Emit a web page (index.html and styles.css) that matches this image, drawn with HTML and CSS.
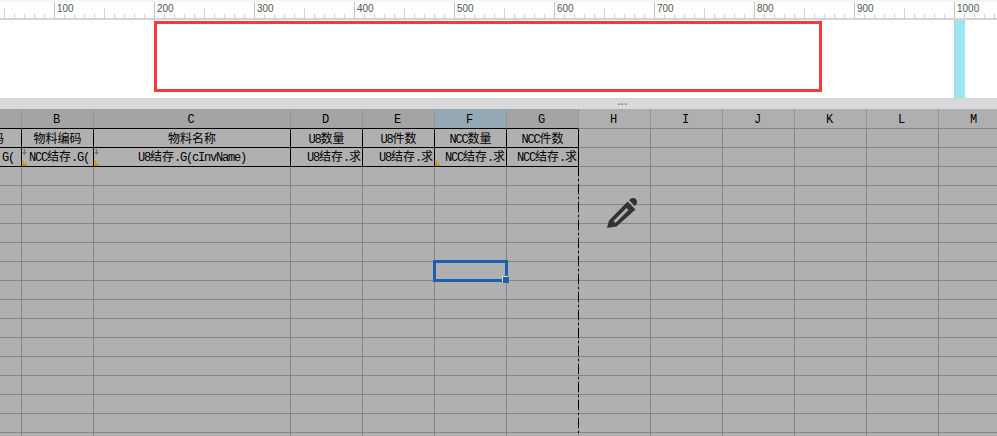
FILE: index.html
```html
<!DOCTYPE html>
<html lang="zh">
<head>
<meta charset="utf-8">
<title>Report designer</title>
<link rel="stylesheet" href="styles.css">
</head>
<body>
<div class="ruler">
  <span class="seg"></span><span class="seg">100</span><span class="seg">200</span><span class="seg">300</span><span class="seg">400</span><span class="seg">500</span><span class="seg">600</span><span class="seg">700</span><span class="seg">800</span><span class="seg">900</span><span class="seg">1000</span>
</div>
<div class="canvas">
  <div class="frame"></div>
  <div class="band"></div>
</div>
<div class="splitter"><span class="grip">···</span></div>
<div class="sheet">
  <div class="h k"></div><div class="h k">B</div><div class="h k">C</div><div class="h k">D</div><div class="h k">E</div><div class="h k sel">F</div><div class="h k">G</div><div class="h">H</div><div class="h">I</div><div class="h">J</div><div class="h">K</div><div class="h">L</div><div class="h">M</div>

  <div class="k t title a-title">码</div><div class="k t title">物料编码</div><div class="k t title">物料名称</div><div class="k t title"><span class="l">U8</span>数量</div><div class="k t title"><span class="l">U8</span>件数</div><div class="k t title"><span class="l">NCC</span>数量</div><div class="k t title"><span class="l">NCC</span>件数</div><div></div><div></div><div></div><div></div><div></div><div></div>

  <div class="k t end a-field"><span class="l">G(</span></div><div class="k t left tri arrow"><span class="l">NCC</span>结存<span class="l">.G(</span></div><div class="k t tri arrow"><span class="l">U8</span>结存<span class="l">.G(cInvName)</span></div><div class="k t end"><span class="l">U8</span>结存<span class="l">.</span>求</div><div class="k t end"><span class="l">U8</span>结存<span class="l">.</span>求</div><div class="k t end tri"><span class="l">NCC</span>结存<span class="l">.</span>求</div><div class="k t end"><span class="l">NCC</span>结存<span class="l">.</span>求</div><div></div><div></div><div></div><div></div><div></div><div></div>

  <div></div><div></div><div></div><div></div><div></div><div></div><div></div><div></div><div></div><div></div><div></div><div></div><div></div>
  <div></div><div></div><div></div><div></div><div></div><div></div><div></div><div></div><div></div><div></div><div></div><div></div><div></div>
  <div></div><div></div><div></div><div></div><div></div><div></div><div></div><div></div><div></div><div></div><div></div><div></div><div></div>
  <div></div><div></div><div></div><div></div><div></div><div></div><div></div><div></div><div></div><div></div><div></div><div></div><div></div>
  <div></div><div></div><div></div><div></div><div></div><div></div><div></div><div></div><div></div><div></div><div></div><div></div><div></div>
  <div></div><div></div><div></div><div></div><div></div><div></div><div></div><div></div><div></div><div></div><div></div><div></div><div></div>
  <div></div><div></div><div></div><div></div><div></div><div></div><div></div><div></div><div></div><div></div><div></div><div></div><div></div>
  <div></div><div></div><div></div><div></div><div></div><div></div><div></div><div></div><div></div><div></div><div></div><div></div><div></div>
  <div></div><div></div><div></div><div></div><div></div><div></div><div></div><div></div><div></div><div></div><div></div><div></div><div></div>
  <div></div><div></div><div></div><div></div><div></div><div></div><div></div><div></div><div></div><div></div><div></div><div></div><div></div>
  <div></div><div></div><div></div><div></div><div></div><div></div><div></div><div></div><div></div><div></div><div></div><div></div><div></div>
  <div></div><div></div><div></div><div></div><div></div><div></div><div></div><div></div><div></div><div></div><div></div><div></div><div></div>
  <div></div><div></div><div></div><div></div><div></div><div></div><div></div><div></div><div></div><div></div><div></div><div></div><div></div>
  <div></div><div></div><div></div><div></div><div></div><div></div><div></div><div></div><div></div><div></div><div></div><div></div><div></div>
  <div></div><div></div><div></div><div></div><div></div><div></div><div></div><div></div><div></div><div></div><div></div><div></div><div></div>

  <div class="pagebreak"></div>
  <div class="selection"><span class="handle"></span></div>
  <svg class="pencil" viewBox="0 0 30 30" aria-hidden="true">
    <path fill-rule="evenodd" d="M0 30 L2 22.5 L20.5 3.5 L28.5 11.5 L9.5 28.5 Z M6.5 23 L8.5 25 L21.5 12 L19.5 10 Z"/>
    <path d="M22 2.2 L23.5 .8 Q26.5 -1 29 1.2 Q31 4 29.2 6.6 L28 8 Z"/>
  </svg>
</div>
</body>
</html>
```
FILE: styles.css
```css
* { box-sizing: border-box; }
html, body { margin: 0; padding: 0; }
body {
  width: 997px;
  height: 436px;
  overflow: hidden;
  background: #fff;
  font-family: "Liberation Mono", "Noto Sans CJK SC", monospace;
  font-size: 12px;
  color: #000;
}

/* ruler */
.ruler {
  display: flex;
  height: 20px;
  padding-top: 2px;
  margin-left: -46px;
  overflow: hidden;
  width: 1043px;
  background: linear-gradient(#f5f5f5 2px, #fff 2px);
  border-bottom: 2px solid #d4d4d4;
}
.seg {
  flex: 0 0 100px;
  height: 16px;
  padding: 1px 0 0 2px;
  font: 10px/12px "Liberation Sans", sans-serif;
  color: #555;
  border-left: 1px solid #c4c4c4;
  background:
    linear-gradient(#d0d0d0, #d0d0d0) 49px 6px / 1px 10px no-repeat,
    repeating-linear-gradient(90deg, transparent 0 9px, #d4d4d4 9px 10px) 0 12px / 100% 4px no-repeat;
}

/* canvas */
.canvas {
  position: relative;
  height: 79px;
  background: #fff;
  border-bottom: 1px solid #d0d0d0;
}
.frame {
  position: absolute;
  left: 154px;
  top: 1px;
  width: 668px;
  height: 71px;
  border: 3px solid #f93a3a;
}
.band {
  position: absolute;
  left: 954px;
  top: 0;
  width: 11px;
  height: 78px;
  background: #9ce5f5;
  border-left: 1px solid #c8c8c8;
}

/* splitter */
.splitter {
  display: flex;
  justify-content: center;
  height: 10px;
  background: #d9d9db;
  padding-left: 248px;
  color: #777;
  font: bold 10px/10px "Liberation Sans", sans-serif;
}
.grip { height: 10px; line-height: 11px; }

/* sheet */
.sheet {
  position: relative;
  display: grid;
  grid-template-columns: 22px 72px 197px repeat(10, 72px);
  grid-auto-rows: 19px;
  grid-template-rows: 20px;
  width: 997px;
  height: 327px;
  overflow: hidden;
  background: #b0b0b0;
}
.sheet > div {
  border-right: 1px solid #858585;
  border-bottom: 1px solid #858585;
}
.sheet > .h {
  background: #afafaf;
  border-right-color: #969696;
  text-align: center;
  line-height: 19px;
  padding: 2px 2px 0 0;
}
.sheet > .h.k { background: #a4a4a4; border-bottom-color: #000; }
.sheet > .h.sel { background: #94a9b3; }
.sheet > .k:not(.h) { border-color: #000; }

.t {
  position: relative;
  overflow: hidden;
  white-space: nowrap;
  text-align: center;
  line-height: 18px;
  padding-top: 1px;
}
.sheet > .title { padding-top: 3px; line-height: 16px; }
.end { text-align: right; padding-right: 1px; }
.sheet > .a-title { text-align: left; text-indent: -8px; }
.sheet > .a-field { padding-right: 7px; }
.sheet > .left { text-align: left; padding-left: 7px; }
.l { font-size: 12px; letter-spacing: -1.2px; }

.tri::after {
  content: "";
  position: absolute;
  left: 0;
  bottom: 0;
  width: 0;
  height: 0;
  border-bottom: 6px solid #c69a1a;
  border-right: 6px solid transparent;
}
.arrow::before {
  content: "";
  position: absolute;
  left: 0;
  top: 1px;
  width: 5px;
  height: 6px;
  background: #777;
  clip-path: polygon(35% 0, 65% 0, 65% 50%, 100% 50%, 50% 100%, 0 50%, 35% 50%);
}

/* overlays */
.sheet > .pagebreak {
  position: absolute;
  left: 578px;
  top: 57px;
  width: 1px;
  height: 270px;
  border: 0;
  background: repeating-linear-gradient(#000 0 10px, transparent 10px 13px, #000 13px 15px, transparent 15px 18px);
}
.sheet > .selection {
  position: absolute;
  left: 433px;
  top: 151px;
  width: 75px;
  height: 22px;
  border: 3px solid #1f5fb0;
}
.handle {
  position: absolute;
  right: -4px;
  bottom: -4px;
  width: 6px;
  height: 6px;
  background: #1f5fb0;
  box-shadow: -1px -1px 0 #d8d8d8;
}
.pencil {
  position: absolute;
  left: 607px;
  top: 89px;
  width: 30px;
  height: 30px;
  fill: #333;
  overflow: visible;
}
```
